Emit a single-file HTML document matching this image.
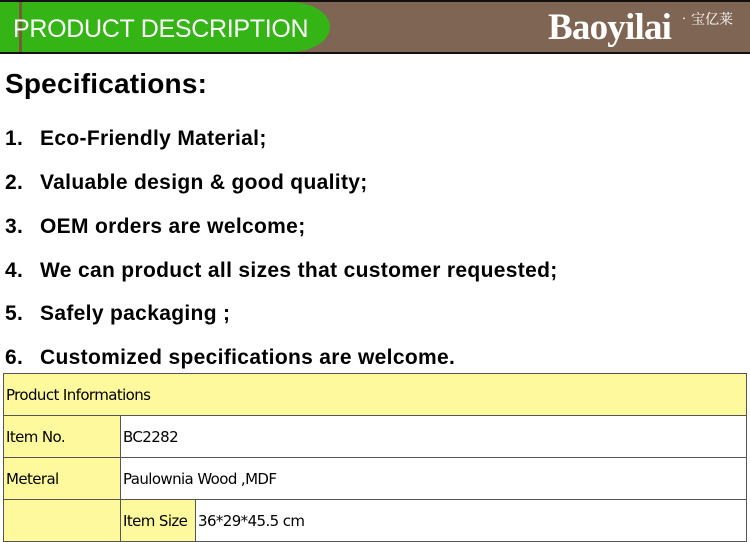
<!DOCTYPE html>
<html><head><meta charset="utf-8"><style>
body{margin:0;width:750px;height:535px;overflow:hidden;background:#fff;font-family:"Liberation Sans",sans-serif;position:relative}
.hdr{position:absolute;left:0;top:0;width:750px;height:54px;background:#7f6553;border-top:2px solid #111;border-bottom:2px solid #111;box-sizing:border-box;overflow:hidden}
.green{position:absolute;left:0;top:0;width:330px;height:50px;background:#35b416;border-radius:0 40px 40px 0/0 25px 25px 0}
.vl{position:absolute;left:19px;top:0;width:3px;height:50px;background:#7a5a3a}
.ht{position:absolute;left:13px;top:13px;color:#fff;font-size:25px;letter-spacing:-0.3px}
.logo{position:absolute;left:548px;top:4px;color:#fff;font-family:"Liberation Serif",serif;font-size:37px;font-weight:bold;letter-spacing:-0.8px}
.cn{position:absolute;left:677px;top:7px;color:#fff;font-size:14px;font-family:"Noto Serif CJK SC",serif}
.spec{position:absolute;left:5px;top:68px;font-size:28px;font-weight:bold;letter-spacing:0.2px}
.it{position:absolute;left:5px;font-size:21px;font-weight:bold;letter-spacing:0.33px}
.it span{position:absolute;left:35px;white-space:nowrap}
table{position:absolute;left:3px;top:373px;width:744px;border-collapse:collapse;font-family:"DejaVu Sans",sans-serif;font-size:15px;letter-spacing:-0.6px}
td{border:1.5px solid #555;height:41px;padding:0 2px;vertical-align:middle}
.y{background:#fdf99c}
</style></head><body>
<div class="hdr"><div class="green"></div><div class="vl"></div><div class="ht">PRODUCT DESCRIPTION</div><div class="logo">Baoyilai</div><div class="cn">•宝亿莱</div></div>
<div class="spec">Specifications:</div>
<div class="it" style="top:127px">1.<span>Eco-Friendly Material;</span></div>
<div class="it" style="top:171px">2.<span>Valuable design &amp; good quality;</span></div>
<div class="it" style="top:215px">3.<span>OEM orders are welcome;</span></div>
<div class="it" style="top:259px">4.<span>We can product all sizes that customer requested;</span></div>
<div class="it" style="top:302px">5.<span>Safely packaging ;</span></div>
<div class="it" style="top:346px">6.<span>Customized specifications are welcome.</span></div>
<table>
<tr><td class="y" colspan="3">Product Informations</td></tr>
<tr><td class="y" style="width:112px">Item No.</td><td colspan="2">BC2282</td></tr>
<tr><td class="y">Meteral</td><td colspan="2">Paulownia Wood ,MDF</td></tr>
<tr><td class="y"></td><td class="y" style="width:70px">Item Size</td><td>36*29*45.5 cm</td></tr>
</table>
</body></html>
